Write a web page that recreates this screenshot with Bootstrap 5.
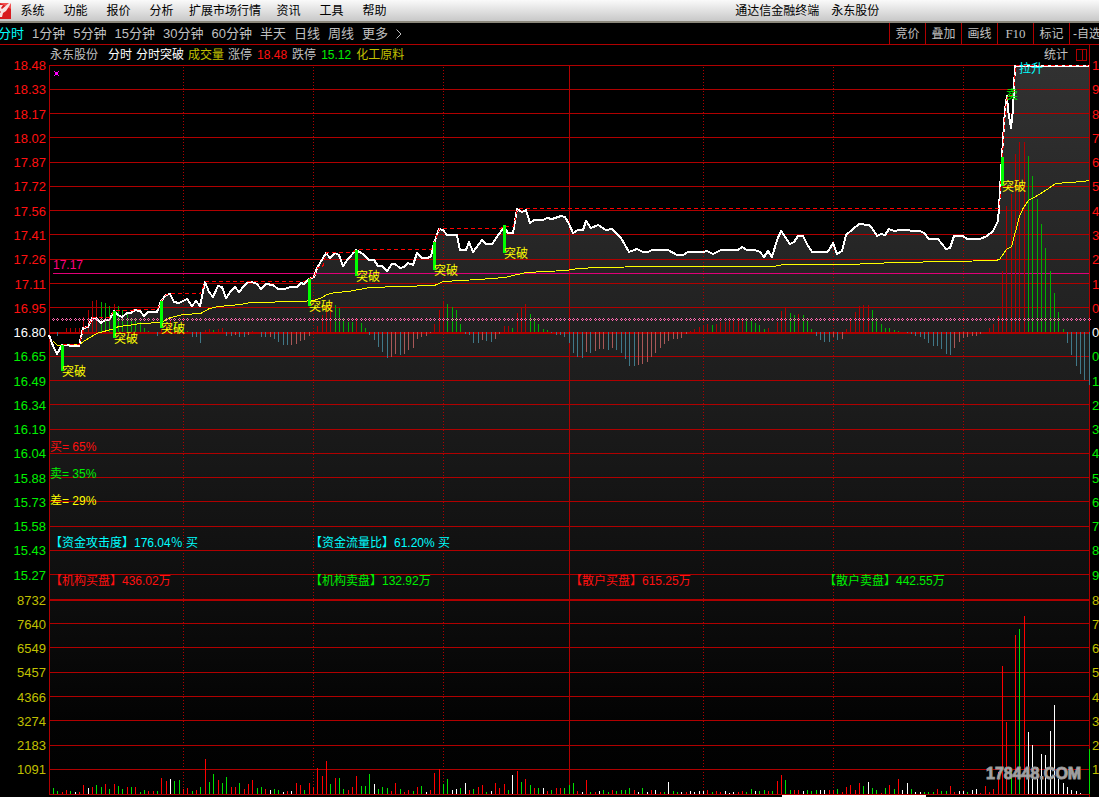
<!DOCTYPE html>
<html lang="zh-CN">
<head>
<meta charset="utf-8">
<meta name="viewport" content="width=device-width, initial-scale=1">
<title>通达信金融终端 永东股份</title>
<link rel="stylesheet" href="https://cdn.jsdelivr.net/npm/bootstrap@5.3.0/dist/css/bootstrap.min.css">
<style>
body{background:#000;color:#c0c0c0;font:12px/16px "Liberation Sans","Noto Sans CJK SC",sans-serif}
a{color:inherit;text-decoration:none}
.menubar{height:23px;background:linear-gradient(#fafafa,#c8c8c8);border-bottom:2px solid #8c887c;color:#000}
.menubar a{min-width:43px;padding:0 6px;text-align:center}
.app-title{margin-right:20%;gap:12px}
.toolbar{height:22px;border-bottom:1px solid #b00000;font-size:13px}
.periods{gap:8px;margin-left:-2px}
.tools{width:210px}
.tools button{flex:0 0 36px;height:21px;border:0;border-left:1px solid #b00000;background:none;color:inherit;font-size:12px;line-height:16px;padding:0;white-space:nowrap}
.tools .serif{font-family:"Liberation Serif",serif;font-size:13px}
.tools .last-tool{text-align:left;padding-left:3px}
.axis{font-size:13px;line-height:16px;padding-top:9px}
.axis-left{width:49px;text-align:right;padding-right:3px}
.axis-right{width:10px;border-left:1px solid #b00000;padding-left:2px;overflow:hidden}
.scale-price{flex:534 0 0}
.scale-vol{flex:193 0 0;margin-top:1px;color:#c0c000}
.scale-rest{flex:15 0 0}
.info{height:20px;gap:4px;padding-left:1px;padding-right:2px}
.info strong{font-weight:400;margin:0 1px}
.info .stock{margin-right:6px}
.c-red{color:#ff1010}.c-green{color:#00f000}.c-white{color:#fff}.c-olive{color:#c0c000}
.c-yellow{color:#ff0}.c-cyan{color:#0ff}.c-pink{color:#ff0080}
.plot{z-index:1;min-height:0}
.plot svg{overflow:visible;shape-rendering:crispEdges}
.labels span{position:absolute;transform:translateY(-50%);padding-top:1px;white-space:nowrap}
.labels .watermark{font:bold 16px/20px "Liberation Sans Narrow","Liberation Sans",sans-serif;color:#aaa;-webkit-text-stroke:1px #999}
</style>
</head>
<body class="vh-100 d-flex flex-column overflow-hidden">
<nav class="menubar d-flex align-items-center flex-shrink-0 text-nowrap">
  <svg width="11" height="18" viewBox="0 0 11 18" aria-hidden="true"><path d="M0 1h11v16H0z" fill="#d81c20"/><path d="M0 1h11v6z" fill="#f05050"/><path d="M0 3h3L1 6l1 1 7-6h2L8 6 6 9l-3 2-1 4H0v-4l1-1-1-1z" fill="#f6e4e4"/></svg>
  <a href="#">系统</a><a href="#">功能</a><a href="#">报价</a><a href="#">分析</a><a href="#">扩展市场行情</a><a href="#">资讯</a><a href="#">工具</a><a href="#">帮助</a>
  <div class="app-title d-flex ms-auto"><span>通达信金融终端</span><span>永东股份</span></div>
</nav>
<div class="toolbar d-flex align-items-center justify-content-between flex-shrink-0 text-nowrap overflow-hidden">
  <div class="periods d-flex">
    <a href="#" class="c-cyan">分时</a><a href="#">1分钟</a><a href="#">5分钟</a><a href="#">15分钟</a><a href="#">30分钟</a><a href="#">60分钟</a><a href="#">半天</a><a href="#">日线</a><a href="#">周线</a><a href="#">更多</a>
    <a href="#" aria-label="展开"><svg width="6" height="10" viewBox="0 0 6 10"><path d="M.5.5 5 5 .5 9.500" fill="none" stroke="#c0c0c0"/></svg></a>
  </div>
  <div class="tools d-flex overflow-hidden">
    <button type="button">竞价</button><button type="button">叠加</button><button type="button">画线</button><button type="button" class="serif">F10</button><button type="button">标记</button><button type="button" class="last-tool">-自选</button>
  </div>
</div>
<main class="d-flex flex-fill" style="min-height:0">
  <div class="axis axis-left d-flex flex-column" data-side="left"></div>
  <section class="d-flex flex-column flex-fill" style="min-width:0">
    <header class="info d-flex align-items-center text-nowrap">
      <span class="stock">永东股份</span><span class="c-white">分时</span><span class="c-white">分时突破</span><span class="c-olive">成交量</span>
      <span>涨停</span><strong class="c-red">18.48</strong><span>跌停</span><strong class="c-green">15.12</strong><span class="c-olive">化工原料</span>
      <span class="ms-auto me-1">统计</span>
      <svg width="11" height="12" viewBox="0 0 11 12" shape-rendering="crispEdges" aria-hidden="true"><path d="M.5.5h10v11H.5zM6.500.5v11" fill="none" stroke="#b00000"/></svg>
    </header>
    <div class="plot position-relative flex-fill">
      <svg id="chart" class="position-absolute top-0 start-0 w-100 h-100" viewBox="49 65 1040 732" preserveAspectRatio="none">
        <defs><linearGradient id="fade" gradientUnits="userSpaceOnUse" x1="0" y1="65" x2="0" y2="794">
          <stop offset="0" stop-color="#313131"/><stop offset=".25" stop-color="#262626"/><stop offset=".46" stop-color="#1c1c1c"/><stop offset=".72" stop-color="#0e0e0e"/><stop offset=".9" stop-color="#030303"/><stop offset="1" stop-color="#000"/>
        </linearGradient></defs>
      </svg>
      <div class="labels position-absolute top-0 start-0 w-100 h-100"></div>
    </div>
  </section>
  <div class="axis axis-right d-flex flex-column" data-side="right"></div>
</main>
<script src="https://cdn.jsdelivr.net/npm/bootstrap@5.3.0/dist/js/bootstrap.bundle.min.js"></script>
<script>
(() => {
// Axis scales
const prices='18.48 18.33 18.17 18.02 17.87 17.72 17.56 17.41 17.26 17.11 16.95 16.80 16.65 16.49 16.34 16.19 16.04 15.88 15.73 15.58 15.43 15.27'.split(' ');
const percents='1987654321000123456789'.split('');
const volumes='8732 7640 6549 5457 4366 3274 2183 1091'.split(' ');
function scale(list,cls,color){
  return `<div class="${cls} d-flex flex-column">`+list.map((t,i)=>`<div class="d-flex flex-fill flex-column justify-content-center ${color?color(i):''}" style="flex-basis:0">${t}</div>`).join('')+'</div>';
}
const tone=i=>i<11?'c-red':i===11?'c-white':'c-green';
document.querySelector('[data-side=left]').innerHTML=scale(prices,'scale-price',tone)+scale(volumes,'scale-vol')+'<div class="scale-rest"></div>';
document.querySelector('[data-side=right]').innerHTML=scale(percents,'scale-price',tone)+scale(volumes.map(v=>v[0]),'scale-vol')+'<div class="scale-rest"></div>';

// Intraday price, average price
const price=[[49,335],[53,346],[57,354],[62,345],[75,346],[79,346],[83,328],[88,327],[92,318],[96,318],[101,323],[105,320],[109,320],[114,311],[118,315],[122,317],[127,313],[131,313],[135,310],[140,311],[144,316],[148,312],[157,312],[161,301],[166,295],[170,294],[174,302],[179,303],[183,301],[187,299],[192,306],[196,301],[200,306],[205,282],[209,292],[213,297],[218,286],[222,287],[226,298],[231,291],[235,287],[239,292],[244,286],[248,282],[252,282],[257,284],[261,289],[266,284],[273,285],[278,289],[285,289],[290,287],[297,287],[301,283],[304,284],[309,279],[314,277],[317,268],[326,253],[330,258],[335,253],[339,255],[343,266],[348,259],[356,250],[363,254],[369,260],[374,260],[378,266],[382,266],[387,271],[392,264],[395,264],[400,268],[404,267],[408,263],[413,265],[417,253],[422,258],[428,258],[431,256],[434,243],[439,229],[443,230],[447,235],[457,235],[460,250],[466,250],[469,242],[473,252],[482,240],[486,244],[492,244],[504,227],[508,233],[513,233],[517,209],[522,212],[526,210],[530,223],[534,220],[543,220],[547,218],[552,219],[561,216],[565,217],[569,224],[573,233],[578,230],[583,230],[586,221],[591,228],[598,225],[606,230],[612,229],[621,238],[629,252],[637,249],[643,252],[648,252],[652,250],[668,250],[677,255],[683,255],[688,252],[703,252],[707,251],[713,254],[721,250],[738,250],[742,247],[747,250],[755,250],[760,252],[764,257],[768,251],[772,257],[777,240],[781,231],[790,244],[794,242],[798,236],[803,236],[807,244],[812,252],[827,252],[829,250],[833,243],[837,254],[842,251],[846,235],[859,224],[869,225],[872,228],[877,236],[881,234],[885,235],[889,229],[894,231],[900,230],[920,231],[924,233],[929,239],[938,239],[946,249],[950,248],[954,236],[963,236],[967,239],[980,239],[987,236],[993,231],[998,221],[999,208],[1001,173],[1003,140],[1005,110],[1007,96],[1008,110],[1011,128],[1013,110],[1015,66],[1089,66]];
const average=[[53,341],[57,345],[79,344],[83,341],[96,333],[114,328],[118,326],[127,325],[140,323],[161,322],[170,317],[183,314],[200,313],[209,308],[218,306],[240,304],[250,302],[300,301],[313,300],[322,297],[326,294],[335,292],[348,291],[369,287],[400,286],[434,285],[443,281],[478,279],[504,277],[517,274],[526,272],[565,270],[578,268],[597,267],[652,266],[773,266],[783,264],[847,264],[896,262],[950,261],[995,260],[999,259],[1006,249],[1011,246],[1015,231],[1019,216],[1023,207],[1028,200],[1037,195],[1048,188],[1055,183],[1083,181],[1089,180]];
// Momentum, one value a minute
const momentum='0 -4 0 4 4 4 4 15 22 31 32 30 29 26 28 26 22 18 14 14 10 4 1 0 -4 3 8 12 8 8 4 1 -5 -5 -11 2 3 2 3 4 -4 -4 -3 -5 -5 -3 1 0 -5 -5 -5 -7 -10 -13 -13 -13 -12 -9 -8 -4 0 6 17 27 29 27 24 14 10 10 13 9 4 -3 -8 -15 -20 -26 -25 -22 -23 -22 -18 -16 -7 -5 -4 -1 8 22 30 28 25 22 8 -2 -3 -11 -11 -8 -9 -10 -7 -2 6 6 4 19 25 28 18 13 8 3 2 -1 -3 -3 -5 -11 -21 -25 -26 -20 -21 -19 -17 -17 -18 -16 -18 -21 -27 -34 -34 -33 -32 -30 -25 -21 -16 -12 -9 -7 -7 -6 -2 1 3 5 6 8 7 8 10 10 11 12 13 14 13 12 9 7 3 4 0 10 21 24 19 17 18 17 12 3 -4 -8 -10 -10 -5 -8 -7 3 13 20 26 27 27 22 13 8 4 4 2 1 0 -1 -2 -4 -5 -7 -11 -14 -14 -17 -22 -23 -16 -10 -6 -5 -4 -4 -2 0 4 8 16 61 126 138 178 190 190 176 156 133 108 84 61 39 20 3 -11 -23 -34 -42 -48 -53'.split(' ').map(Number);
// Volume: height and colour
const volume='6g 3g 2r 4r 3g 2w 2r 9r 6w 7r 9g 7g 10r 5g 10r 8g 5g 7r 7g 7r 2g 4g 3r 3r 3g 16r 13r 15w 13g 14g 5r 6r 3g 4r 7g 35r 12g 20g 14r 11g 17g 7r 7r 11g 5r 10r 14r 6g 7g 5r 4w 5g 4g 2w 3r 3w 11r 9r 4g 11r 7r 26r 18r 33r 10g 16r 16g 5g 4r 7r 18r 8g 8g 20g 10w 5g 7g 6g 3r 11r 5g 2r 4r 3g 7r 8g 2w 4r 21r 25r 10g 15g 4w 5w 6g 11w 4r 5g 7r 9r 2g 3w 11r 6r 10r 4g 19w 23r 12g 15r 9g 6r 6g 6w 3r 4g 6r 6r 6g 9g 11g 3r 2w 14r 2g 2r 3w 4g 2g 4r 3g 4g 4g 6g 4r 2w 6g 2w 4r 4w 2r 2g 12w 3g 2g 2w 2r 3w 2w 3w 3w 4r 2g 3r 2r 3w 1w 2w 2r 3r 2g 5g 3w 3g 4g 3r 3g 13r 19r 14g 4g 4r 4r 3w 4g 3g 4g 4w 4w 4r 4r 5g 2r 7r 9r 4r 11r 8g 12w 6g 4g 1r 6g 9r 5g 15r 4w 11w 5g 2w 2w 2g 2g 2g 5r 3g 3g 8r 2r 3w 3w 2g 4w 5w 1r 8r 2r 5r 22r 128r 72r 24g 159r 165g 178r 62w 49w 27w 40w 39w 63w 89w 15w 11w 7w 4w 3w 1w 0w 45g'.split(' ');

const xAt=i=>49+Math.floor((i+1)*13/3);
const rect=(x,y,w,h,f)=>`<rect x="${x}" y="${y}" width="${w}" height="${h}" fill="${f}"/>`;
const pts=a=>a.map(p=>p.join(',')).join(' ');
const half=a=>a.map(([x,y])=>[x+.5,y+.5]);
let s=`<polygon points="${pts(price)} 1089,794 49,794" fill="url(#fade)"/>`;
[65,89,113,137,162,186,210,234,259,283,307,356,380,404,429,453,477,501,526,550,574,623,647,672,696,720,745,769,794].forEach(y=>s+=rect(49,y,1040,1,'#b00000'));
[332,599].forEach(y=>s+=rect(49,y,1040,2,'#b00000'));
s+=rect(49,65,1,730,'#b00000')+rect(569,65,1,729,'#b00000');
[183,313,443,703,833,963].forEach(x=>s+=`<path d="M${x+.5} 67V794" stroke="#b00000" stroke-dasharray="1 2"/>`);
s+=rect(53,273,1036,1,'#e00078');
momentum.forEach((v,i)=>{
  const before=i?momentum[i-1]:0;
  const up=v>before||(v===before&&i>1&&momentum[i-1]>=momentum[i-2]);
  if(v>0)s+=rect(xAt(i),332-v,1,v,up?'#b00000':'#00b000');
  if(v<0)s+=rect(xAt(i),332,1,-v,up?'#a85858':'#407888');
});
volume.forEach((t,i)=>{const h=parseInt(t);s+=rect(xAt(i),794-h,1,h,{r:'#f00',g:'#00e000',w:'#fff'}[t.slice(-1)]);});
s+=`<polyline points="${pts(half(average))}" fill="none" stroke="#ff0"/>`;
s+=`<polyline points="${pts(price)}" fill="none" stroke="#fff" stroke-width="2" stroke-linejoin="round"/>`;
// Day high so far
let peak=345;
const high=[];
price.slice(3).forEach(([x,y])=>{if(y<peak){const p=high[high.length-1];if(p&&x-p[0]>5&&peak-y<30)high.push([x-4,peak]);peak=y;}high.push([x,peak]);});
s+=`<polyline points="${pts(high.map(p=>[p[0]+.5,p[1]-.5]))}" fill="none" stroke="#f00" stroke-dasharray="4 3"/>`;
for(let i=0;i<240;i++){const x=xAt(i);s+=rect(x,318,1,1,'#ff68b0')+rect(x-1,319,1,1,'#ff68b0')+rect(x+1,319,1,1,'#ff68b0')+rect(x,320,1,1,'#ff68b0');}
const breaks=[[62,345,371],[114,311,338],[161,301,328],[309,279,306],[356,250,276],[434,242,270],[504,225,253],[1002,157,186]];
breaks.forEach(([x,a,b])=>s+=rect(x-1,a,3,b-a,'#0f0'));
s+='<path d="M54 71l5 5M59 71l-5 5" stroke="#f0f"/>'+rect(55,72,3,3,'#f0f')+rect(782,795,144,2,'#fff')+rect(1088,65,1,1,'#fff');
document.getElementById('chart').insertAdjacentHTML('beforeend',s);

// Notes placed on the plot
const notes=[[53,264,'17.17','c-pink'],[1019,68,'拉升','c-cyan'],[1006,94,'卖','c-green'],
 [50,446,'买= 65%','c-red'],[50,473,'卖= 35%','c-green'],[50,500,'差= 29%','c-yellow'],
 [50,542,'【资金攻击度】176.04％ 买','c-cyan'],[310,542,'【资金流量比】61.20% 买','c-cyan'],
 [50,580,'【机构买盘】436.02万','c-red'],[310,580,'【机构卖盘】132.92万','c-green'],[570,580,'【散户买盘】615.25万','c-red'],[824,580,'【散户卖盘】442.55万','c-green'],
 [986,773,'178448.COM','watermark']].concat(breaks.map(b=>[b[0],b[2],'突破','c-yellow']));
document.querySelector('.labels').innerHTML=notes.map(([x,y,t,c])=>`<span class="${c}" style="left:${(x-49)/10.4}%;top:${(y-65)/7.32}%">${t}</span>`).join('');
})();
</script>
</body>
</html>
